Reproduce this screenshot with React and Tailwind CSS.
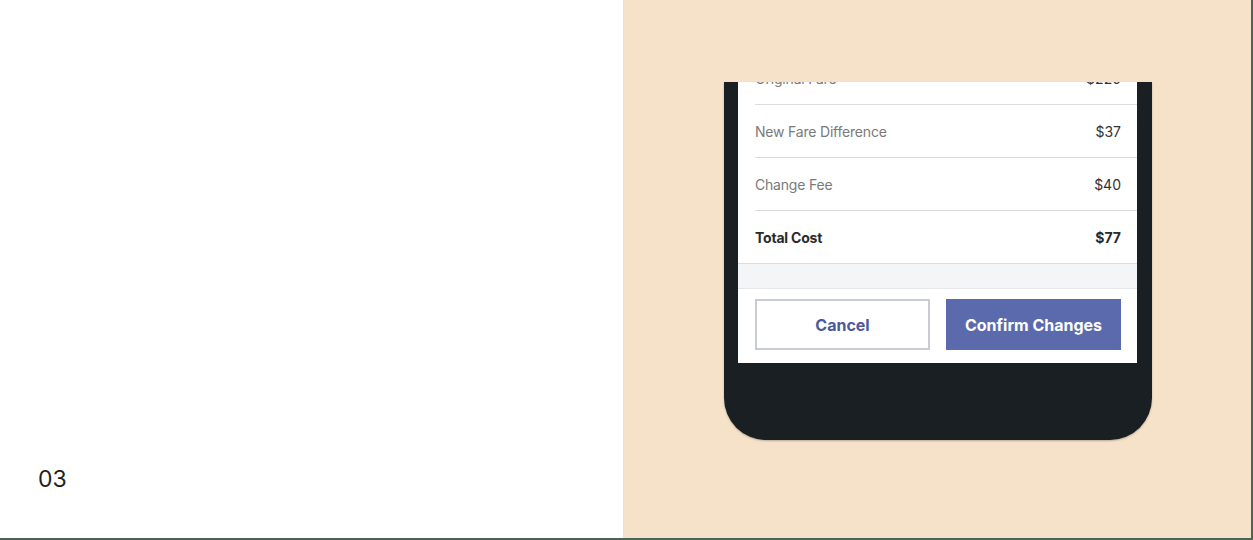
export default function App() {
  const rows = [
    { label: "Original Fare", value: "$220" },
    { label: "New Fare Difference", value: "$37" },
    { label: "Change Fee", value: "$40" },
  ];

  return (
    <div className="flex h-[540px] w-[1253px] border-b-2 border-r-2 border-[#4b6459] bg-white font-['Inter',sans-serif]">
      {/* left slide text */}
      <div className="w-[624px] shrink-0 border-r border-[#e4e2df] pl-[38px] pt-[464px]">
        <span className="text-[23px] leading-[30px] text-[#1f1f1f]">03</span>
      </div>

      {/* right illustration: phone cropped at the top */}
      <div className="flex-1 bg-[#f6e2c8] pt-[82px] pl-[100px]">
        <div className="h-[358px] w-[428px] overflow-hidden rounded-b-[42px] bg-[#1a1f24] px-[14px] pr-[15px] shadow-[0_1px_2px_rgba(0,0,0,0.25)]">
          <div className="-mt-[30px] bg-white">
            {rows.map((r) => (
              <div
                key={r.label}
                className="ml-[17px] flex h-[53px] items-center justify-between border-b border-[#dcdcdc] pr-[16px] text-[14px]"
              >
                <span className="text-[#7a7a7a] tracking-[-0.2px]">{r.label}</span>
                <span className="text-[#333333]">{r.value}</span>
              </div>
            ))}
            <div className="flex h-[53px] items-center justify-between border-b border-[#dcdcdc] pl-[17px] pr-[16px] text-[14px] font-bold text-[#2a2a2a]">
              <span className="tracking-[-0.2px]">Total Cost</span>
              <span>$77</span>
            </div>
            <div className="h-[25px] border-b border-[#e6e7ea] bg-[#f4f5f7]" />
            <div className="flex gap-[16px] pl-[17px] pr-[16px] pt-[10px] pb-[13px]">
              <button className="flex h-[51px] w-[175px] items-center justify-center border-2 border-[#c9cbd6] bg-white text-[16px] font-bold text-[#4b5a9c]">
                Cancel
              </button>
              <button className="flex h-[51px] w-[175px] items-center justify-center bg-[#5a6aad] text-[16px] font-bold text-white">
                Confirm Changes
              </button>
            </div>
          </div>
        </div>
      </div>
    </div>
  );
}
